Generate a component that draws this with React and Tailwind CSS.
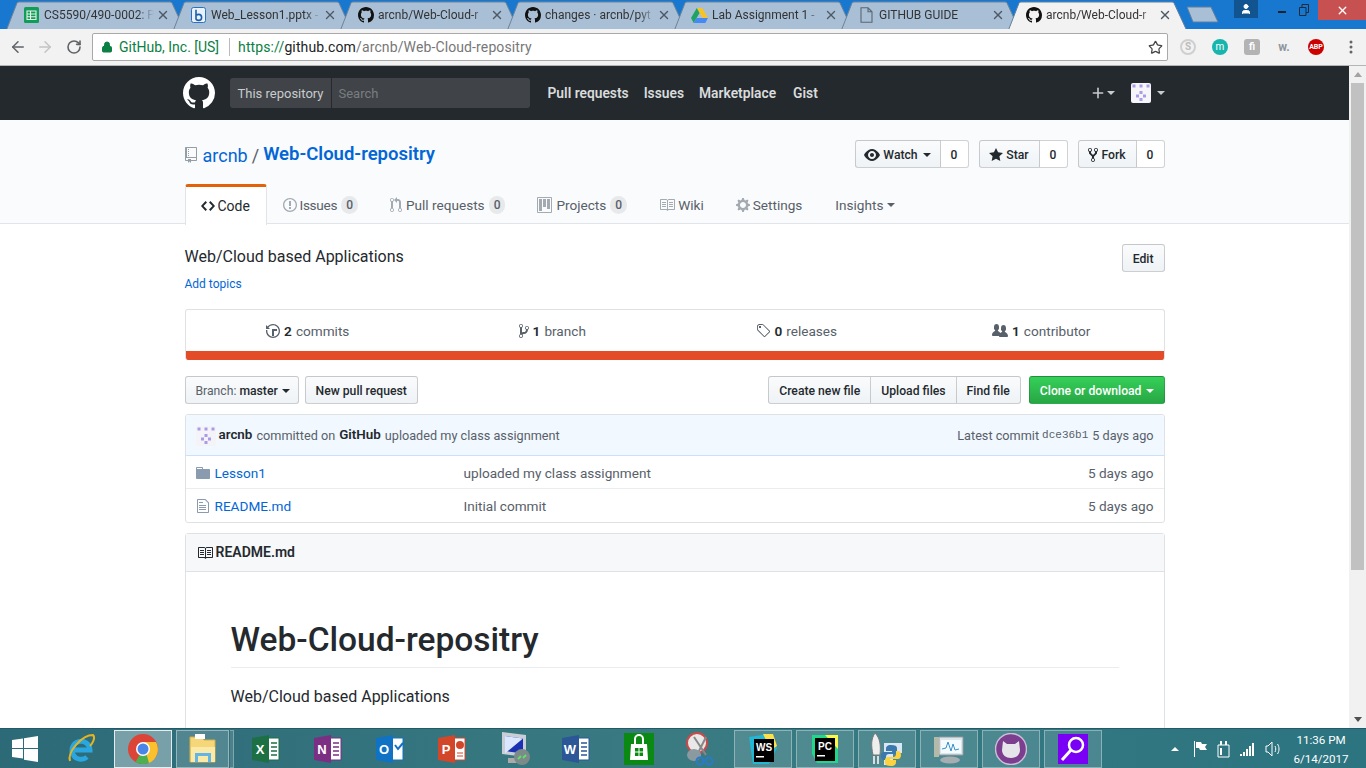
import React from 'react';
import { ArrowLeft, ArrowRight, RotateCw, Lock, Star, X, Plus, User } from 'lucide-react';

// the old octicon set, the current one in react-icons has different strokes
const OCT = {
  mark: [16, 'M8 0C3.58 0 0 3.58 0 8c0 3.54 2.29 6.53 5.47 7.59.4.07.55-.17.55-.38 0-.19-.01-.82-.01-1.49-2.01.37-2.53-.49-2.69-.94-.09-.23-.48-.94-.82-1.13-.28-.15-.68-.52-.01-.53.63-.01 1.08.58 1.23.82.72 1.21 1.87.87 2.33.66.07-.52.28-.87.51-1.07-1.78-.2-3.64-.89-3.64-3.95 0-.87.31-1.59.82-2.15-.08-.2-.36-1.02.08-2.12 0 0 .67-.21 2.2.82.64-.18 1.32-.27 2-.27.68 0 1.36.09 2 .27 1.53-1.04 2.2-.82 2.2-.82.44 1.1.16 1.92.08 2.12.51.56.82 1.27.82 2.15 0 3.07-1.87 3.75-3.65 3.95.29.25.54.73.54 1.48 0 1.07-.01 1.93-.01 2.2 0 .21.15.46.55.38A8.013 8.013 0 0 0 16 8c0-4.42-3.58-8-8-8z'],
  code: [14, 'M9.5 3L8 4.5 11.5 8 8 11.5 9.5 13 14 8 9.5 3zm-5 0L0 8l4.5 5L6 11.5 2.5 8 6 4.5 4.5 3z'],
  issue: [14, 'M7 2.3c3.14 0 5.7 2.56 5.7 5.7s-2.56 5.7-5.7 5.7A5.71 5.71 0 0 1 1.3 8c0-3.14 2.56-5.7 5.7-5.7zM7 1C3.14 1 0 4.14 0 8s3.14 7 7 7 7-3.14 7-7-3.14-7-7-7zm1 3H6v5h2V4zm0 6H6v2h2v-2z'],
  pr: [12, 'M11 11.28V5c-.03-.78-.34-1.47-.94-2.06C9.46 2.35 8.78 2.03 8 2H7V0L4 3l3 3V4h1c.27.02.48.11.69.31.21.2.3.42.31.69v6.28A1.993 1.993 0 0 0 10 15a1.993 1.993 0 0 0 1-3.72zm-1 2.92c-.66 0-1.2-.55-1.2-1.2 0-.65.55-1.2 1.2-1.2.65 0 1.2.55 1.2 1.2 0 .65-.55 1.2-1.2 1.2zM4 3c0-1.11-.89-2-2-2a1.993 1.993 0 0 0-1 3.72v6.56A1.993 1.993 0 0 0 2 15a1.993 1.993 0 0 0 1-3.72V4.72c.59-.34 1-.98 1-1.72zm-.8 10c0 .66-.55 1.2-1.2 1.2-.65 0-1.2-.55-1.2-1.2 0-.65.55-1.2 1.2-1.2.65 0 1.2.55 1.2 1.2zM2 4.2C1.34 4.2.8 3.65.8 3c0-.65.55-1.2 1.2-1.2.65 0 1.2.55 1.2 1.2 0 .65-.55 1.2-1.2 1.2z'],
  project: [15, 'M10 12h3V2h-3v10zm-4-2h3V2H6v8zm-4 4h3V2H2v12zm-1 1h13V1H1v14zM14 0H1a1 1 0 0 0-1 1v14a1 1 0 0 0 1 1h13a1 1 0 0 0 1-1V1a1 1 0 0 0-1-1z'],
  book: [16, 'M3 5h4v1H3V5zm0 3h4V7H3v1zm0 2h4V9H3v1zm11-5h-4v1h4V5zm0 2h-4v1h4V7zm0 2h-4v1h4V9zm2-6v9c0 .55-.45 1-1 1H9.5l-1 1-1-1H2c-.55 0-1-.45-1-1V3c0-.55.45-1 1-1h5.5l1 1 1-1H15c.55 0 1 .45 1 1zm-8 .5L7.5 3H2v9h6V3.5zm7-.5H9.5l-.5.5V12h6V3z'],
  gear: [14, 'M14 8.77v-1.6l-1.94-.64-.45-1.09.88-1.84-1.13-1.13-1.81.91-1.09-.45-.69-1.92h-1.6l-.63 1.94-1.11.45-1.84-.88-1.13 1.13.91 1.81-.45 1.09L0 7.23v1.59l1.94.64.45 1.09-.88 1.84 1.13 1.13 1.81-.91 1.09.45.69 1.92h1.59l.63-1.94 1.11-.45 1.84.88 1.13-1.13-.92-1.81.47-1.09L14 8.75v.02zM7 11c-1.66 0-3-1.34-3-3s1.34-3 3-3 3 1.34 3 3-1.34 3-3 3z'],
  eye: [16, 'M8.06 2C3 2 0 8 0 8s3 6 8.06 6C13 14 16 8 16 8s-3-6-7.94-6zM8 12c-2.2 0-4-1.78-4-4 0-2.2 1.8-4 4-4 2.22 0 4 1.8 4 4 0 2.22-1.78 4-4 4zm2-4c0 1.11-.89 2-2 2-1.11 0-2-.89-2-2 0-1.11.89-2 2-2 1.11 0 2 .89 2 2z'],
  star: [14, 'M14 6l-4.9-.64L7 1 4.9 5.36 0 6l3.6 3.26L2.67 14 7 11.67 11.33 14l-.93-4.74L14 6z'],
  fork: [10, 'M8 1a1.993 1.993 0 0 0-1 3.72V6L5 8 3 6V4.72A1.993 1.993 0 0 0 2 1a1.993 1.993 0 0 0-1 3.72V6.5l3 3v1.78A1.993 1.993 0 0 0 5 15a1.993 1.993 0 0 0 1-3.72V9.5l3-3V4.72A1.993 1.993 0 0 0 8 1zM2 4.2C1.34 4.2.8 3.65.8 3c0-.65.55-1.2 1.2-1.2.65 0 1.2.55 1.2 1.2 0 .65-.55 1.2-1.2 1.2zm3 10c-.66 0-1.2-.55-1.2-1.2 0-.65.55-1.2 1.2-1.2.65 0 1.2.55 1.2 1.2 0 .65-.55 1.2-1.2 1.2zm3-10c-.66 0-1.2-.55-1.2-1.2 0-.65.55-1.2 1.2-1.2.65 0 1.2.55 1.2 1.2 0 .65-.55 1.2-1.2 1.2z'],
  repo: [12, 'M4 9H3V8h1v1zm0-3H3v1h1V6zm0-2H3v1h1V4zm0-2H3v1h1V2zm8-1v12c0 .55-.45 1-1 1H6v2l-1.5-1.5L3 16v-2H1c-.55 0-1-.45-1-1V1c0-.55.45-1 1-1h10c.55 0 1 .45 1 1zm-1 10H1v2h2v-1h3v1h5v-2zm0-10H2v9h9V1z'],
  history: [14, 'M8 13H6V6h5v2H8v5zM7 1C4.81 1 2.87 2.02 1.59 3.59L0 2v4h4L2.46 4.46C3.52 3.17 5.15 2.3 7 2.3c3.14 0 5.7 2.56 5.7 5.7s-2.56 5.7-5.7 5.7A5.71 5.71 0 0 1 1.3 8c0-.34.03-.67.09-1H.08C.03 7.33 0 7.66 0 8c0 3.86 3.14 7 7 7s7-3.14 7-7-3.14-7-7-7z'],
  branch: [10, 'M10 5c0-1.11-.89-2-2-2a1.993 1.993 0 0 0-1 3.72v.3c-.02.52-.23.98-.63 1.38-.4.4-.86.61-1.38.63-.83.02-1.48.16-2 .45V4.72a1.993 1.993 0 0 0-1-3.72C.88 1 0 1.89 0 3a2 2 0 0 0 1 1.72v6.56c-.59.35-1 .99-1 1.72 0 1.11.89 2 2 2 1.11 0 2-.89 2-2 0-.53-.2-1-.53-1.36.09-.06.48-.41.59-.47.25-.11.56-.17.94-.17 1.05-.05 1.95-.45 2.75-1.25S8.95 7.77 9 6.73h-.02C9.59 6.37 10 5.73 10 5zM2 1.8c.66 0 1.2.55 1.2 1.2 0 .65-.55 1.2-1.2 1.2C1.35 4.2.8 3.65.8 3c0-.65.55-1.2 1.2-1.2zm0 12.41c-.66 0-1.2-.55-1.2-1.2 0-.65.55-1.2 1.2-1.2.65 0 1.2.55 1.2 1.2 0 .65-.55 1.2-1.2 1.2zm6-8c-.66 0-1.2-.55-1.2-1.2 0-.65.55-1.2 1.2-1.2.65 0 1.2.55 1.2 1.2 0 .65-.55 1.2-1.2 1.2z'],
  tag: [14, 'M7.73 1.73C7.26 1.26 6.62 1 5.96 1H3.5C2.12 1 1 2.12 1 3.5v2.47c0 .66.27 1.3.73 1.77l6.06 6.06c.39.39 1.02.39 1.41 0l4.59-4.59a.996.996 0 0 0 0-1.41L7.73 1.73zM2.38 7.09c-.31-.3-.48-.71-.48-1.13V3.5c0-.88.72-1.6 1.6-1.6h2.47c.42 0 .83.17 1.13.47l6.14 6.13-4.73 4.73-6.13-6.14zM3.01 3h2v2H3V3h.01z'],
  people: [16, 'M16 12.999c0 .439-.45 1-1 1H7.995c-.539 0-.994-.447-.995-.999H1c-.54 0-1-.561-1-1 0-2.634 3-4 3-4s.229-.409 0-1c-.841-.621-1.058-.59-1-3 .058-2.419 1.367-3 2.5-3s2.442.58 2.5 3c.058 2.41-.159 2.379-1 3-.229.59 0 1 0 1s1.549.711 2.42 2.088C9.196 9.369 10 8.999 10 8.999s.229-.409 0-1c-.841-.62-1.058-.59-1-3 .058-2.419 1.367-3 2.5-3s2.437.581 2.495 3c.059 2.41-.158 2.38-1 3-.229.59 0 1 0 1s3.005 1.366 3.005 4z'],
  folder: [14, 'M13 4H7V3c0-.66-.31-1-1-1H1c-.55 0-1 .45-1 1v10c0 .55.45 1 1 1h12c.55 0 1-.45 1-1V5c0-.55-.45-1-1-1zM6 4H1V3h5v1z'],
  file: [12, 'M6 5H2V4h4v1zM2 8h7V7H2v1zm0 2h7V9H2v1zm0 2h7v-1H2v1zm10-7.5V14c0 .55-.45 1-1 1H1c-.55 0-1-.45-1-1V2c0-.55.45-1 1-1h7.5L12 4.5zM11 5L8 2H1v12h10V5z'],
};

const Oct = ({ name, scale = 1, className = '' }) => {
  const [w, d] = OCT[name];
  return (
    <svg className={`shrink-0 ${className}`} width={w * scale} height={16 * scale} viewBox={`0 0 ${w} 16`} fill="currentColor"><path fillRule="evenodd" d={d} /></svg>
  );
};

const GitMark = ({ size = 16, className = 'text-[#111]' }) => <Oct name="mark" scale={size / 16} className={className} />;

const Identicon = ({ size = 20, bg = '#f4f3f8' }) => (
  <svg width={size} height={size} viewBox="0 0 20 20">
    <rect width="20" height="20" rx="2" fill={bg} />
    <g fill="#a99be6">
      <rect x="1.5" y="1.5" width="3" height="3" /><rect x="8.5" y="1.5" width="3" height="3" /><rect x="15.5" y="1.5" width="3" height="3" />
      <rect x="8.5" y="8" width="3" height="3" /><rect x="5" y="11.5" width="3" height="3" /><rect x="12" y="11.5" width="3" height="3" /><rect x="8.5" y="15" width="3" height="3" />
    </g>
  </svg>
);

const Caret = ({ className = '' }) => (
  <span className={`inline-block w-0 h-0 border-x-[4px] border-x-transparent border-t-[4px] border-t-current ${className}`} />
);

const SheetsIcon = () => (
  <svg width="15" height="16" viewBox="0 0 15 16"><rect width="15" height="16" rx="1.5" fill="#0f9d58" /><path d="M3 4h9v8.5H3zM3 7h9M3 9.8h9M6.5 4v8.5" fill="none" stroke="#e6f4ea" strokeWidth="1.1" /></svg>
);
const BingIcon = () => (
  <svg width="15" height="16" viewBox="0 0 15 16"><rect x=".5" y=".5" width="14" height="15" rx="2" fill="#e9f2fb" stroke="#2a72bd" /><path d="M5 2.8v9c0 1 1 1.6 2.6 1.6 1.7 0 3-1.2 3-3s-1.3-3-3-3c-.9 0-1.5.3-1.9.8" fill="none" stroke="#1a5ea8" strokeWidth="1.6" /></svg>
);
const DriveIcon = () => (
  <svg width="17" height="15" viewBox="0 0 17 15"><path d="M5.8 0h5.4l5.8 10h-5.4z" fill="#f7c325" /><path d="M5.8 0 0 10l2.7 5 5.8-10z" fill="#1ea362" /><path d="M2.7 15h11.6l2.7-5H5.5z" fill="#4688f4" /></svg>
);
const DocIcon = () => (
  <svg width="13" height="16" viewBox="0 0 13 16"><path d="M1 .8h7l4 4v10.4H1zM8 .8v4h4" fill="none" stroke="#5a6672" strokeWidth="1.1" /></svg>
);

const TABS = [
  { title: 'CS5590/490-0002: P', icon: <SheetsIcon /> },
  { title: 'Web_Lesson1.pptx -', icon: <BingIcon /> },
  { title: 'arcnb/Web-Cloud-r', icon: <GitMark /> },
  { title: 'changes · arcnb/pyt', icon: <GitMark /> },
  { title: 'Lab Assignment 1 -', icon: <DriveIcon /> },
  { title: 'GITHUB GUIDE', icon: <DocIcon /> },
  { title: 'arcnb/Web-Cloud-r', icon: <GitMark />, active: true },
];

const ChromeTab = ({ title, icon, active }) => (
  <div className={`relative flex items-center w-[179px] h-[28px] -ml-[12px] first:ml-0 ${active ? 'z-10' : ''}`}>
    <svg className="absolute inset-0" width="179" height="29" viewBox="0 0 179 29">
      <path d="M0.5 29 L11 2 Q11.5 1 13 1 L164 1 Q165.5 1 166 2 L178.5 29" fill={active ? '#f2f2f2' : '#a9bfd6'} stroke={active ? '#5f7f9f' : '#6d8398'} strokeWidth="1" />
    </svg>
    <span className="relative ml-[17px] w-[17px] flex justify-center shrink-0">{icon}</span>
    <span className="relative ml-[4px] w-[110px] overflow-hidden whitespace-nowrap text-[12px] text-[#333] [mask-image:linear-gradient(to_right,black_85%,transparent)]">{title}</span>
    <X className="relative ml-[2px] text-[#4d5a66]" size={14} strokeWidth={2.4} />
  </div>
);

const TitleBar = () => (
  <div className="flex h-[29px] bg-[#1878d0] shrink-0 overflow-hidden">
    <div className="flex items-end pl-[6px] pt-[1px]">
      {TABS.map((t) => <ChromeTab key={t.title + t.active} {...t} />)}
      <svg className="mb-[6px] -ml-[1px]" width="34" height="17" viewBox="0 0 34 17">
        <path d="M1 1h24l7 15H7z" fill="#a9bfd6" stroke="#5f7f9f" />
      </svg>
    </div>
    <div className="ml-auto flex items-start">
      <div className="w-[24px] h-[18px] bg-[#11548f] flex items-center justify-center">
        <User size={12} className="text-white" fill="white" />
      </div>
      <div className="w-[24px] ml-[12px] h-[20px] flex items-center justify-center">
        <span className="w-[8px] h-[2px] bg-[#123] mt-[3px]" />
      </div>
      <div className="w-[20px] h-[20px] flex items-center justify-center">
        <svg width="10" height="12" viewBox="0 0 10 12" fill="none" stroke="#1c2b3a"><path d="M.5 3.5h6.5v8H.5zM3 3V.5h6.5v8H7" /></svg>
      </div>
      <div className="w-[48px] ml-[4px] h-[20px] bg-[#c75050] flex items-center justify-center">
        <X size={13} className="text-white" strokeWidth={2.5} />
      </div>
    </div>
  </div>
);

const ExtIcons = () => (
  <div className="flex items-center ml-[12px]">
    <span className="w-[16px] h-[16px] rounded-full border-2 border-[#cfcfcf] text-[10px] leading-[12px] text-center text-[#bbb] font-bold">S</span>
    <span className="ml-[16px] w-[16px] h-[16px] rounded-full bg-[#17b5ad] text-[10px] leading-[15px] text-center text-white">m</span>
    <span className="ml-[16px] w-[16px] h-[16px] rounded-[3px] bg-[#b3b3b3] text-[10px] leading-[16px] text-center text-white font-bold">fi</span>
    <span className="ml-[16px] w-[16px] text-[12px] font-bold text-[#8d969e] text-center">w.</span>
    <span className="ml-[16px] w-[16px] h-[16px] rounded-full bg-[#cc0000] text-[7px] leading-[16px] text-center text-white font-bold">ABP</span>
    <svg className="ml-[25px]" width="4" height="14" viewBox="0 0 4 14" fill="#666"><circle cx="2" cy="2" r="1.5" /><circle cx="2" cy="7" r="1.5" /><circle cx="2" cy="12" r="1.5" /></svg>
  </div>
);

const Toolbar = () => (
  <div className="flex items-center h-[37px] bg-[#f2f2f2] border-b border-[#b5b5b5] shrink-0 pl-[9px]">
    <ArrowLeft size={18} className="text-[#5f6368]" />
    <ArrowRight size={18} className="text-[#c4c4c4] ml-[9px]" />
    <RotateCw size={16} className="text-[#5f6368] ml-[12px]" strokeWidth={2.4} />
    <div className="ml-[10px] w-[1076px] h-[28px] flex items-center bg-white border border-[#a9a9a9] rounded-[2px] pl-[7px] pr-[3px] text-[14px]">
      <Lock size={12} className="text-[#0b8043] ml-[1px]" fill="#0b8043" />
      <span className="ml-[6px] text-[#0b8043]">GitHub, Inc. [US]</span>
      <span className="ml-[10px] w-px h-[18px] bg-[#bbb]" />
      <span className="ml-[8px] text-[#0b8043] tracking-[0.12px]">https://</span>
      <span className="text-[#222] tracking-[0.12px]">github.com</span>
      <span className="text-[#777] tracking-[0.12px]">/arcnb/Web-Cloud-repositry</span>
      <Star size={15} className="ml-auto mr-[1px] text-[#444]" />
    </div>
    <ExtIcons />
  </div>
);

const NavBar = () => (
  <div className="bg-[#24292e] h-[54px] shrink-0">
    <div className="w-[980px] mx-auto flex items-center h-full">
      <GitMark size={32} className="text-white -ml-[2px]" />
      <div className="ml-[15px] flex w-[300px] h-[30px] rounded-[3px] bg-[#404448] text-[13px] leading-[31px]">
        <span className="pl-[8px] text-[#c9cbcd] border-r border-[#24292e] w-[102px] whitespace-nowrap">This repository</span>
        <span className="pl-[7px] text-[#797d81]">Search</span>
      </div>
      <div className="flex ml-[18px] pt-[1px] text-[13.8px] font-semibold text-[#d9dbdc] gap-[15px]">
        <span>Pull requests</span>
        <span>Issues</span>
        <span>Marketplace</span>
        <span className="ml-[2px]">Gist</span>
      </div>
      <div className="ml-auto flex items-center text-[#c8cacc]">
        <Plus size={16} strokeWidth={2.4} />
        <Caret className="ml-[1px]" />
        <span className="ml-[16px] flex"><Identicon bg="#f6f6fa" /></span>
        <Caret className="ml-[6px]" />
      </div>
    </div>
  </div>
);

const BTN = 'bg-gradient-to-b from-[#fafbfc] to-[#eff3f6] border border-[rgba(27,31,35,0.2)] text-[#24292e] font-medium text-[12.2px] pt-[2px]';

const SocialButton = ({ icon, label, count, caret, className = '' }) => (
  <div className={`flex h-[28px] ${className}`}>
    <span className={`${BTN} flex items-center justify-center gap-[3px] rounded-l-[3px]`}>
      {icon}{label}{caret && <Caret className="ml-[2px]" />}
    </span>
    <span className="flex items-center justify-center w-[28px] pt-[2px] border border-l-0 border-[rgba(27,31,35,0.2)] bg-white rounded-r-[3px] text-[12px] font-medium text-[#24292e]">{count}</span>
  </div>
);

const Counter = ({ n }) => (
  <span className="ml-[4px] px-[5px] rounded-[20px] bg-[rgba(27,31,35,0.08)] text-[12px] leading-[18px] font-medium text-[#586069]">{n}</span>
);

const RepoTab = ({ icon, label, count, caret, gap = 'mr-[4px]', active, className = '' }) => (
  <div className={`flex items-center whitespace-nowrap ${active ? 'h-[41px] w-[82px] px-[15px] text-[14px] bg-white border-x border-[#e1e4e8] border-t-[3px] border-t-[#e36209] rounded-t-[3px] text-[#24292e]' : 'h-[40px] px-[16px] pt-[2px] text-[#586069]'} ${className}`}>
    {icon && <span className={`flex ${gap} ${active ? 'text-[#24292e]' : 'text-[#a3aab1]'}`}>{icon}</span>}
    {label}
    {count !== undefined && <Counter n={count} />}
    {caret && <Caret className="ml-[4px]" />}
  </div>
);

const RepoHead = () => (
  <div className="bg-[#fafbfc] border-b border-[#e1e4e8] h-[104px] shrink-0">
    <div className="w-[980px] mx-auto">
      <div className="flex items-center h-[64px] pt-[4px]">
        <div className="flex items-center mt-[2px]">
          <Oct name="repo" className="text-[#959da5]" />
          <span className="ml-[6px] text-[18px] text-[#0366d6]">arcnb</span>
          <span className="mx-[4px] text-[18px] text-[#586069]">/</span>
          <span className="text-[18.5px] font-semibold text-[#0366d6]">Web-Cloud-repositry</span>
        </div>
        <div className="ml-auto flex">
          <SocialButton icon={<Oct name="eye" />} label="Watch" count="0" caret className="[&>span:first-child]:w-[86px]" />
          <SocialButton icon={<Oct name="star" />} label="Star" count="0" className="ml-[10px] [&>span:first-child]:w-[61px]" />
          <SocialButton icon={<Oct name="fork" />} label="Fork" count="0" className="ml-[10px] [&>span:first-child]:w-[59px]" />
        </div>
      </div>
      <div className="flex text-[13.6px] h-[41px]">
        <RepoTab active icon={<Oct name="code" />} gap="mr-[3px]" label="Code" />
        <RepoTab icon={<Oct name="issue" />} gap="mr-[3px]" label={<span className="tracking-[-0.3px]">Issues</span>} count={0} />
        <RepoTab icon={<Oct name="pr" />} label="Pull requests" count={0} />
        <RepoTab icon={<Oct name="project" />} label="Projects" count={0} />
        <RepoTab icon={<Oct name="book" />} gap="mr-[3px]" label="Wiki" />
        <RepoTab icon={<Oct name="gear" />} gap="mr-[3px]" label="Settings" />
        <RepoTab label="Insights" caret className="ml-[1px]" />
      </div>
    </div>
  </div>
);

const SummaryItem = ({ icon, n, label }) => (
  <div className="flex-1 flex items-center justify-center text-[13.6px] text-[#586069]">
    <span className="mr-[4px] flex">{icon}</span>
    <span className="font-semibold text-[#24292e] mr-[4px]">{n}</span>{label}
  </div>
);

const Summary = () => (
  <div className="mt-[16px] h-[51px] border border-b-0 border-[#dfe2e5] rounded-[3px] overflow-hidden flex flex-col">
    <div className="flex h-[41px] items-center pt-[2px]">
      <SummaryItem icon={<Oct name="history" />} n="2" label="commits" />
      <SummaryItem icon={<Oct name="branch" />} n="1" label="branch" />
      <SummaryItem icon={<Oct name="tag" />} n="0" label="releases" />
      <SummaryItem icon={<Oct name="people" />} n="1" label="contributor" />
    </div>
    <div className="h-[9px] bg-[#e34c26]" />
  </div>
);

const Actions = () => (
  <div className="mt-[16px] flex h-[28px]">
    <div className={`${BTN} flex items-center px-[10px] rounded-[3px] w-[114px] whitespace-nowrap`}>
      <span className="text-[#586069] font-normal mr-[3px]">Branch:</span>master<Caret className="ml-[4px]" />
    </div>
    <div className={`${BTN} ml-[6px] flex items-center px-[10px] rounded-[3px] whitespace-nowrap`}>New pull request</div>
    <div className="ml-auto flex">
      <div className={`${BTN} flex items-center px-[10px] rounded-l-[3px]`}>Create new file</div>
      <div className={`${BTN} flex items-center px-[10px] border-l-0`}>Upload files</div>
      <div className={`${BTN} flex items-center px-[10px] border-l-0 rounded-r-[3px]`}>Find file</div>
      <div className="ml-[8px] flex items-center px-[10px] pt-[2px] rounded-[3px] bg-gradient-to-b from-[#34d058] to-[#28a745] border border-[rgba(27,31,35,0.2)] text-white font-medium text-[12.2px] whitespace-nowrap">
        Clone or download<Caret className="ml-[4px]" />
      </div>
    </div>
  </div>
);

const FileRow = ({ icon, name, msg, age, last }) => (
  <div className={`flex items-center h-[33px] px-[10px] text-[13.6px] ${last ? 'pt-[1px]' : 'pt-[2px] border-b border-[#eaecef]'}`}>
    <span className="w-[19px] flex text-[#8a9bb0]">{icon}</span>
    <span className="text-[#0366d6] w-[249px]">{name}</span>
    <span className="text-[#586069]">{msg}</span>
    <span className="ml-auto text-[#586069]">{age}</span>
  </div>
);

const FileList = () => (
  <div className="mt-[10px] border border-[#dfe2e5] rounded-[3px] overflow-hidden">
    <div className="flex items-center h-[42px] bg-[#f1f8ff] px-[10px] pt-[1px] text-[12.7px] text-[#586069] -mt-px -mx-px border border-[#c8e1ff]">
      <Identicon />
      <span className="ml-[3px] text-[13.4px] font-semibold text-[#24292e]">arcnb</span>
      <span className="ml-[4px]">committed on</span>
      <span className="ml-[4px] text-[13.4px] font-semibold text-[#24292e]">GitHub</span>
      <span className="ml-[4px]">uploaded my class assignment</span>
      <span className="ml-auto">Latest commit</span>
      <span className="ml-[3px] text-[11px] [font-family:'Liberation_Mono',monospace]">dce36b1</span>
      <span className="ml-[4px]">5 days ago</span>
    </div>
    <FileRow icon={<Oct name="folder" />} name="Lesson1" msg="uploaded my class assignment" age="5 days ago" />
    <FileRow icon={<Oct name="file" className="ml-[1px]" />} name="README.md" msg="Initial commit" age="5 days ago" last />
  </div>
);

const Readme = () => (
  <div className="mt-[10px] border border-[#dfe2e5] rounded-t-[3px] h-[220px]">
    <div className="flex items-center h-[38px] bg-[#f6f8fa] border-b border-[#dfe2e5] px-[10px] text-[14px] font-semibold text-[#24292e]">
      <Oct name="book" className="ml-[1px] mr-[3px]" />README.md
    </div>
    <div className="px-[45px] pt-[48px]">
      <h1 className="text-[33.5px] font-medium leading-[40px] pb-[7px] border-b border-[#eaecef] text-[#24292e]">Web-Cloud-repositry</h1>
      <p className="mt-[17px] text-[16px] text-[#24292e]">Web/Cloud based Applications</p>
    </div>
  </div>
);

const Scrollbar = () => (
  <div className="w-[17px] bg-[#f1f1f1] shrink-0 flex flex-col items-center">
    <div className="h-[17px] flex items-center"><span className="w-0 h-0 border-x-[4px] border-x-transparent border-b-[5px] border-b-[#a3a3a3]" /></div>
    <div className="w-[13px] h-[487px] bg-[#c1c1c1]" />
    <div className="mt-auto h-[17px] flex items-center"><span className="w-0 h-0 border-x-[4px] border-x-transparent border-t-[5px] border-t-[#505050]" /></div>
  </div>
);

const Page = () => (
  <div className="flex flex-1 min-h-0 overflow-hidden">
    <div className="flex-1 min-w-0 flex flex-col bg-white overflow-hidden">
      <NavBar />
      <RepoHead />
      <div className="w-[980px] mx-auto">
        <div className="flex pt-[20px]">
          <div className="pt-[1px]">
            <div className="text-[16px] text-[#24292e] leading-[24px]">Web/Cloud based Applications</div>
            <div className="mt-[6px] text-[12px] text-[#0366d6]">Add topics</div>
          </div>
          <div className={`${BTN} ml-auto h-[28px] flex items-center px-[10px] rounded-[3px]`}>Edit</div>
        </div>
        <Summary />
        <Actions />
        <FileList />
        <Readme />
      </div>
    </div>
    <Scrollbar />
  </div>
);

const Ms = ({ letter, color, children }) => (
  <svg width="32" height="30" viewBox="0 0 32 30">
    <path d="M15 4h13v22H15z" fill="#fff" stroke={color} />
    {children}
    <path d="M1 4 18 1v28L1 26z" fill={color} />
    <text x="9" y="20" textAnchor="middle" fontSize="13" fontWeight="700" fill="#fff" fontFamily="Liberation Sans">{letter}</text>
  </svg>
);
const lines = (c) => <path d="M20 9h6M20 13h6M20 17h6M20 21h6" stroke={c} strokeWidth="1.5" />;

const TASK_ICONS = [
  <svg width="32" height="32" viewBox="0 0 32 32"><path d="M8 17h17a9 9 0 1 0-3 7" fill="none" stroke="#2aa7e0" strokeWidth="5" /><path d="M5 28C2 19 17 2 28 2c3 3-1 9-3 11" fill="none" stroke="#e6b422" strokeWidth="2" /></svg>,
  <svg width="30" height="30" viewBox="0 0 30 30"><circle cx="15" cy="15" r="15" fill="#db4437" /><path d="M15 15 28 22.5A15 15 0 0 1 7.5 28z" fill="#4caf50" /><path d="M15 8h13a15 15 0 0 1-7 21z" fill="#fbc02d" /><circle cx="15" cy="15" r="7" fill="#fff" /><circle cx="15" cy="15" r="5.5" fill="#4a86e8" /></svg>,
  <svg width="32" height="32" viewBox="0 0 32 32"><path d="M3 4h12l2 3h11v22H3z" fill="#f5d77a" stroke="#d2ae4a" /><path d="M8 1h10v5H8z" fill="#fff" /><path d="M4 14h24v15H4z" fill="#fbe9a7" /><path d="M8 20h16v9h-3v-6H11v6H8z" fill="#63b5e5" /></svg>,
  <Ms letter="X" color="#1d7044">{lines('#1d7044')}</Ms>,
  <Ms letter="N" color="#7b2f83">{lines('#7b2f83')}</Ms>,
  <Ms letter="O" color="#0f72c4"><path d="M20 11l3 4 5-6" stroke="#0f72c4" strokeWidth="2" fill="none" /></Ms>,
  <Ms letter="P" color="#d2472a"><circle cx="23" cy="11" r="4" fill="#d2472a" /><path d="M20 19h6M20 22h6" stroke="#d2472a" /></Ms>,
  <svg width="32" height="36" viewBox="0 0 32 36"><path d="M3 1l24 3v22L3 23z" fill="#c9ced6" /><path d="M6 5l18 2.5v15L6 20z" fill="#1b31b4" /><path d="M6 5l18 2.5-18 15z" fill="#dbe6ff" /><path d="M9 27h14v5H9z" fill="#aaa" /><circle cx="23" cy="26" r="8" fill="#7d8a8a" /><path d="M19 28l3-3M24 27l3-3" stroke="#5fe06a" strokeWidth="2" /></svg>,
  <Ms letter="W" color="#2b5797">{lines('#2b5797')}</Ms>,
  <svg width="30" height="34" viewBox="0 0 30 34"><rect y="1" width="30" height="32" fill="#0a8a12" /><path d="M7 12h16l1 16H6z" fill="#fff" /><path d="M11 12V7a4 4 0 0 1 8 0v5" fill="none" stroke="#fff" strokeWidth="2" /><path d="M11 16h3.5v3.5H11zM15.5 16H19v3.5h-3.5zM11 20.5h3.5V24H11zM15.5 20.5H19V24h-3.5z" fill="#0a8a12" /></svg>,
  <svg width="30" height="36" viewBox="0 0 30 36"><circle cx="11" cy="12" r="10" fill="#e8e8e8" stroke="#c94a4a" strokeWidth="2" /><path d="M8 6l12 18M20 6 11 24" stroke="#888" strokeWidth="2" /><ellipse cx="8" cy="24" rx="7" ry="6" fill="#8a9aa0" /><circle cx="14" cy="30" r="3.5" fill="none" stroke="#2a7ac9" strokeWidth="2" /><circle cx="23" cy="30" r="3.5" fill="none" stroke="#2a7ac9" strokeWidth="2" /></svg>,
  <svg width="28" height="30" viewBox="0 0 28 30"><path d="M0 3 20 0l8 14-8 16H4z" fill="#22b8d4" /><path d="M14 0h10l4 12-6 4z" fill="#fce14b" /><rect x="5" y="5" width="20" height="23" fill="#000" /><text x="15" y="17" textAnchor="middle" fontSize="10" fontWeight="700" fill="#fff" fontFamily="Liberation Sans">WS</text><rect x="7" y="22" width="8" height="1.5" fill="#fff" /></svg>,
  <svg width="28" height="30" viewBox="0 0 28 30"><path d="M1 1h20l6 8v20H6L1 20z" fill="#21d789" /><path d="M14 1h13v14z" fill="#fcf84a" /><rect x="4" y="4" width="20" height="23" fill="#000" /><text x="14" y="16" textAnchor="middle" fontSize="10" fontWeight="700" fill="#fff" fontFamily="Liberation Sans">PC</text><rect x="6" y="21" width="8" height="1.5" fill="#fff" /></svg>,
  <svg width="34" height="36" viewBox="0 0 34 36"><path d="M5 2c5 5 6 12 5 22H3C1 14 1 8 5 2z" fill="#eee" stroke="#777" /><path d="M4 25v8M8 25v8" stroke="#ddd" strokeWidth="2" /><path d="M14 12h18v10h-9v12h-9z" fill="#d9e7f5" /><path d="M21 14c-4 0-5 2-5 4v2h6v1h-8c-2 0-3 2-3 4s1 4 3 4h2v-3c0-2 1-3 3-3h5c2 0 3-1 3-3v-3c0-2-2-3-6-3z" fill="#3a78ae" /><path d="M21 35c4 0 5-2 5-4v-2h-6v-1h8c2 0 3-2 3-4s-1-4-3-4h-2v3c0 2-1 3-3 3h-5c-2 0-3 1-3 3v3c0 2 2 3 6 3z" fill="#fbd23f" /></svg>,
  <svg width="32" height="32" viewBox="0 0 32 32"><path d="M6 4h24v18H6z" fill="#dfe6ea" stroke="#8d9aa0" /><path d="M8 7h20v13H8z" fill="#f4fbff" /><path d="M9 16l4-1 2-6 3 9 2-7 2 6 4-1" fill="none" stroke="#3a8fc9" /><rect x="1" y="4" width="5" height="20" fill="#b5b9a8" /><ellipse cx="17" cy="27" rx="10" ry="3.5" fill="#a7aeb2" /></svg>,
  <svg width="32" height="32" viewBox="0 0 32 32"><circle cx="16" cy="16" r="15.5" fill="#7c3e8f" stroke="#cdbfd6" strokeWidth="1.5" /><path d="M8 8l4 3h8l4-3 1 9c0 5-4 8-9 8s-9-3-9-8z" fill="#e6e6ea" /></svg>,
  <svg width="30" height="30" viewBox="0 0 30 30"><rect width="30" height="30" fill="#7a00f5" /><circle cx="18" cy="11" r="7" fill="none" stroke="#fff" strokeWidth="2.5" /><path d="M13 16 4 26" stroke="#fff" strokeWidth="3" /></svg>,
];

const TaskSlot = ({ icon, index }) => {
  // chrome is the active one, explorer runs open too, the last six are framed
  const active = index === 1;
  const open = index >= 11;
  if (index === 2) {
    return (
      <div className="w-[62px] h-[40px] flex items-center shrink-0">
        <div className="ml-[2px] w-[53px] h-[38px] flex items-center justify-center bg-[rgba(255,255,255,0.16)] border border-[rgba(255,255,255,0.4)]">{icon}</div>
        <div className="w-[4px] h-[38px] ml-px bg-[rgba(255,255,255,0.12)] border border-l-0 border-[rgba(255,255,255,0.3)]" />
      </div>
    );
  }
  return (
    <div className="w-[62px] h-[40px] flex items-center justify-center shrink-0 overflow-hidden">
      <div className={`w-[58px] h-[38px] flex items-center justify-center ${active ? 'bg-[rgba(255,255,255,0.35)] border border-[rgba(255,255,255,0.8)]' : open ? 'bg-[rgba(255,255,255,0.12)] border border-[rgba(255,255,255,0.35)]' : ''}`}>
        {icon}
      </div>
    </div>
  );
};

const Tray = () => (
  <div className="ml-auto flex items-center pr-[10px] text-white">
    <span className="w-0 h-0 border-x-[4px] border-x-transparent border-b-[4px] border-b-white" />
    <svg className="ml-[14px]" width="14" height="16" viewBox="0 0 14 16" fill="#fff"><path d="M1 0h1v16H1zM3 1h5l1 2h5l-2 3 2 3H7L6 7H3z" /></svg>
    <svg className="ml-[10px]" width="13" height="18" viewBox="0 0 13 18" fill="#fff"><path d="M1 5h11v12H1z" fill="none" stroke="#fff" /><path d="M3 1h2v4H3zM8 1h2v4H8zM3 8h2v7H3z" /></svg>
    <svg className="ml-[10px]" width="15" height="14" viewBox="0 0 15 14" fill="#fff"><path d="M0 12h2v2H0zM3 10h2v4H3zM6 7h2v7H6zM9 4h2v10H9zM12 1h2v13h-2z" /></svg>
    <svg className="ml-[10px]" width="15" height="16" viewBox="0 0 15 16" fill="none" stroke="#fff"><path d="M1 5h2l4-4v14l-4-4H1zM10 5c1 2 1 4 0 6M12.5 3c2 3 2 7 0 10" /></svg>
    <div className="ml-[6px] w-[70px] pt-[3px] text-center text-[11.6px] leading-[19px]">
      <div>11:36 PM</div>
      <div>6/14/2017</div>
    </div>
  </div>
);

const Taskbar = () => (
  <div className="flex items-center h-[40px] shrink-0 bg-gradient-to-r from-[#2c6a78] via-[#3a7b82] to-[#2b7480] border-t border-[#245a68]">
    <div className="w-[50px] flex justify-center">
      <svg width="26" height="26" viewBox="0 0 26 26" fill="#fff"><path d="M0 4l11-1.6V12H0zM12 2.3 26 0v12H12zM0 13h11v9.6L0 21zM12 13h14v13l-14-2.2z" /></svg>
    </div>
    {TASK_ICONS.map((icon, i) => <TaskSlot key={i} icon={icon} index={i} />)}
    <Tray />
  </div>
);

export default function App() {
  return (
    <div className="w-[1366px] h-[768px] flex flex-col overflow-hidden font-['Roboto',sans-serif]">
      <TitleBar />
      <Toolbar />
      <Page />
      <Taskbar />
    </div>
  );
}
